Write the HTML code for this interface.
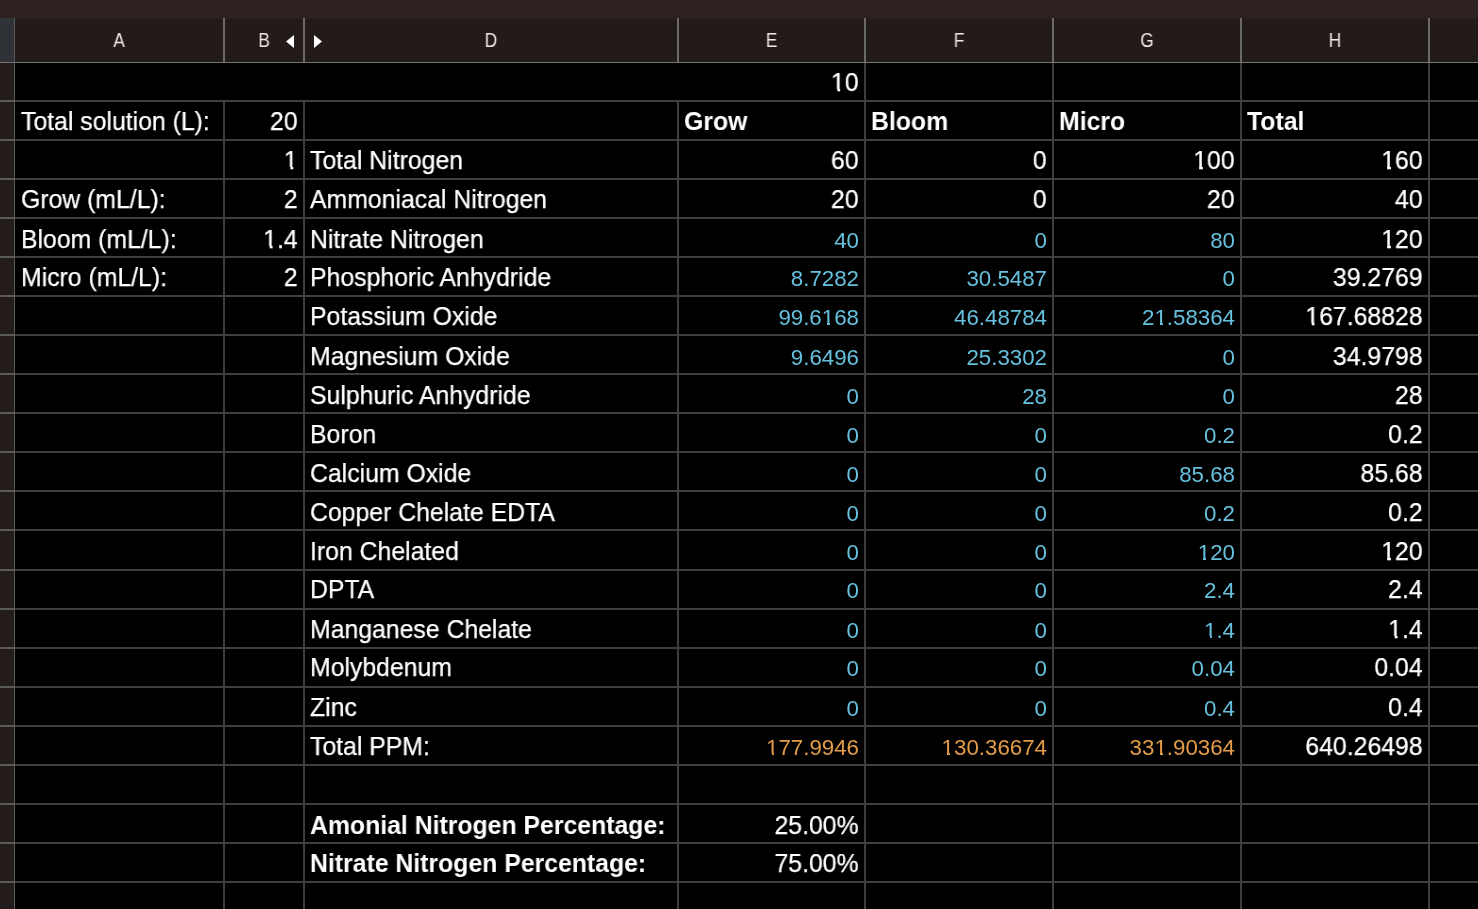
<!DOCTYPE html><html><head><meta charset="utf-8"><style>
html,body{margin:0;padding:0;width:1478px;height:909px;overflow:hidden;background:#000;}
body{position:relative;font-family:"Liberation Sans",sans-serif;}
div{position:absolute;}
.t{white-space:pre;line-height:0;height:0;will-change:transform;}
.r{text-align:right;}
.one{position:relative;}
.one::before,.one::after{content:"";position:absolute;background:#000;bottom:calc(0.212em - 0.6px);height:calc(0.1em + 0.6px);}
.one::before{left:0.03em;width:0.226em;}
.one::after{left:0.375em;width:0.19em;}
.b{font-weight:bold;}
.w.b{-webkit-text-stroke:0;}
.w{color:#ffffff;font-size:24.8px;-webkit-text-stroke:0.25px currentColor;}
.bl{color:#66c0de;font-size:22.3px;}
.o{color:#e29c4a;font-size:22.3px;}
.h{color:#f0e6e6;font-size:19.3px;text-align:center;line-height:0;height:0;will-change:transform;}
</style></head><body>
<div style="left:0;top:0;width:1478px;height:18px;background:#2d2121"></div>
<div style="left:0;top:18px;width:1478px;height:44px;background:#231b1a"></div>
<div style="left:15px;top:18px;width:1463px;height:1px;background:#282020"></div>
<div style="left:0;top:18px;width:14px;height:44px;background:#2f3236"></div>
<div style="left:0;top:62px;width:14px;height:847px;background:#231c1b"></div>
<div style="left:0;top:62px;width:1478px;height:1px;background:#747474"></div>
<div style="left:14px;top:18px;width:1px;height:891px;background:#5a5a5a"></div>
<div style="left:0;top:100px;width:14px;height:2px;background:#5a5a5a"></div>
<div style="left:15px;top:100px;width:1463px;height:2px;background:#3e3e3e"></div>
<div style="left:0;top:139px;width:14px;height:2px;background:#5a5a5a"></div>
<div style="left:15px;top:139px;width:1463px;height:2px;background:#3e3e3e"></div>
<div style="left:0;top:178px;width:14px;height:2px;background:#5a5a5a"></div>
<div style="left:15px;top:178px;width:1463px;height:2px;background:#3e3e3e"></div>
<div style="left:0;top:217px;width:14px;height:2px;background:#5a5a5a"></div>
<div style="left:15px;top:217px;width:1463px;height:2px;background:#3e3e3e"></div>
<div style="left:0;top:256px;width:14px;height:2px;background:#5a5a5a"></div>
<div style="left:15px;top:256px;width:1463px;height:2px;background:#3e3e3e"></div>
<div style="left:0;top:295px;width:14px;height:2px;background:#5a5a5a"></div>
<div style="left:15px;top:295px;width:1463px;height:2px;background:#3e3e3e"></div>
<div style="left:0;top:334px;width:14px;height:2px;background:#5a5a5a"></div>
<div style="left:15px;top:334px;width:1463px;height:2px;background:#3e3e3e"></div>
<div style="left:0;top:373px;width:14px;height:2px;background:#5a5a5a"></div>
<div style="left:15px;top:373px;width:1463px;height:2px;background:#3e3e3e"></div>
<div style="left:0;top:412px;width:14px;height:2px;background:#5a5a5a"></div>
<div style="left:15px;top:412px;width:1463px;height:2px;background:#3e3e3e"></div>
<div style="left:0;top:451px;width:14px;height:2px;background:#5a5a5a"></div>
<div style="left:15px;top:451px;width:1463px;height:2px;background:#3e3e3e"></div>
<div style="left:0;top:490px;width:14px;height:2px;background:#5a5a5a"></div>
<div style="left:15px;top:490px;width:1463px;height:2px;background:#3e3e3e"></div>
<div style="left:0;top:529px;width:14px;height:2px;background:#5a5a5a"></div>
<div style="left:15px;top:529px;width:1463px;height:2px;background:#3e3e3e"></div>
<div style="left:0;top:569px;width:14px;height:2px;background:#5a5a5a"></div>
<div style="left:15px;top:569px;width:1463px;height:2px;background:#3e3e3e"></div>
<div style="left:0;top:608px;width:14px;height:2px;background:#5a5a5a"></div>
<div style="left:15px;top:608px;width:1463px;height:2px;background:#3e3e3e"></div>
<div style="left:0;top:647px;width:14px;height:2px;background:#5a5a5a"></div>
<div style="left:15px;top:647px;width:1463px;height:2px;background:#3e3e3e"></div>
<div style="left:0;top:686px;width:14px;height:2px;background:#5a5a5a"></div>
<div style="left:15px;top:686px;width:1463px;height:2px;background:#3e3e3e"></div>
<div style="left:0;top:725px;width:14px;height:2px;background:#5a5a5a"></div>
<div style="left:15px;top:725px;width:1463px;height:2px;background:#3e3e3e"></div>
<div style="left:0;top:764px;width:14px;height:2px;background:#5a5a5a"></div>
<div style="left:15px;top:764px;width:1463px;height:2px;background:#3e3e3e"></div>
<div style="left:0;top:803px;width:14px;height:2px;background:#5a5a5a"></div>
<div style="left:15px;top:803px;width:1463px;height:2px;background:#3e3e3e"></div>
<div style="left:0;top:842px;width:14px;height:2px;background:#5a5a5a"></div>
<div style="left:15px;top:842px;width:1463px;height:2px;background:#3e3e3e"></div>
<div style="left:0;top:881px;width:14px;height:2px;background:#5a5a5a"></div>
<div style="left:15px;top:881px;width:1463px;height:2px;background:#3e3e3e"></div>
<div style="left:223px;top:18px;width:2px;height:44px;background:#6a6a6a"></div>
<div style="left:223px;top:102px;width:2px;height:807px;background:#3e3e3e"></div>
<div style="left:303px;top:18px;width:2px;height:44px;background:#6a6a6a"></div>
<div style="left:303px;top:102px;width:2px;height:807px;background:#3e3e3e"></div>
<div style="left:677px;top:18px;width:2px;height:44px;background:#6a6a6a"></div>
<div style="left:677px;top:102px;width:2px;height:807px;background:#3e3e3e"></div>
<div style="left:864px;top:18px;width:2px;height:44px;background:#6a6a6a"></div>
<div style="left:864px;top:63px;width:2px;height:846px;background:#3e3e3e"></div>
<div style="left:1052px;top:18px;width:2px;height:44px;background:#6a6a6a"></div>
<div style="left:1052px;top:63px;width:2px;height:846px;background:#3e3e3e"></div>
<div style="left:1240px;top:18px;width:2px;height:44px;background:#6a6a6a"></div>
<div style="left:1240px;top:63px;width:2px;height:846px;background:#3e3e3e"></div>
<div style="left:1428px;top:18px;width:2px;height:44px;background:#6a6a6a"></div>
<div style="left:1428px;top:63px;width:2px;height:846px;background:#3e3e3e"></div>
<div class="h" style="left:15px;width:208px;top:39.91px;font-size:19.88px;transform:scaleX(0.8738)">A</div>
<div class="h" style="left:225px;width:78px;top:39.91px;font-size:19.88px;transform:scaleX(0.8738)">B</div>
<div class="h" style="left:305px;width:372px;top:39.91px;font-size:19.88px;transform:scaleX(0.8738)">D</div>
<div class="h" style="left:679px;width:185px;top:39.91px;font-size:19.88px;transform:scaleX(0.8738)">E</div>
<div class="h" style="left:866px;width:186px;top:39.91px;font-size:19.88px;transform:scaleX(0.8738)">F</div>
<div class="h" style="left:1054px;width:186px;top:39.91px;font-size:19.88px;transform:scaleX(0.8738)">G</div>
<div class="h" style="left:1242px;width:186px;top:39.91px;font-size:19.88px;transform:scaleX(0.8738)">H</div>
<svg style="position:absolute;left:0;top:0" width="1478" height="70"><polygon points="286,41.5 294,35 294,48" fill="#fff"/><polygon points="314,35 322,41.5 314,48" fill="#fff"/></svg>
<div class="t w r" style="left:679px;width:179.6px;top:82.09px;font-size:26.29px;transform:scaleX(0.9434);transform-origin:100% 0"><span class="one">1</span>0</div>
<div class="t w" style="left:20.7px;width:208px;top:121.09px;font-size:26.29px;transform:scaleX(0.9434);transform-origin:0 0">Total solution (L):</div>
<div class="t w r" style="left:225px;width:72.6px;top:121.09px;font-size:26.29px;transform:scaleX(0.9434);transform-origin:100% 0">20</div>
<div class="t w b" style="left:684.2px;width:185px;top:121.09px;font-size:26.29px;transform:scaleX(0.9434);transform-origin:0 0">Grow</div>
<div class="t w b" style="left:871.2px;width:186px;top:121.09px;font-size:26.29px;transform:scaleX(0.9434);transform-origin:0 0">Bloom</div>
<div class="t w b" style="left:1059.2px;width:186px;top:121.09px;font-size:26.29px;transform:scaleX(0.9434);transform-origin:0 0">Micro</div>
<div class="t w b" style="left:1247.2px;width:186px;top:121.09px;font-size:26.29px;transform:scaleX(0.9434);transform-origin:0 0">Total</div>
<div class="t w r" style="left:225px;width:72.6px;top:160.09px;font-size:26.29px;transform:scaleX(0.9434);transform-origin:100% 0"><span class="one">1</span></div>
<div class="t w" style="left:310.2px;width:372px;top:160.09px;font-size:26.29px;transform:scaleX(0.9434);transform-origin:0 0">Total Nitrogen</div>
<div class="t w r" style="left:679px;width:179.6px;top:160.09px;font-size:26.29px;transform:scaleX(0.9434);transform-origin:100% 0">60</div>
<div class="t w r" style="left:866px;width:180.6px;top:160.09px;font-size:26.29px;transform:scaleX(0.9434);transform-origin:100% 0">0</div>
<div class="t w r" style="left:1054px;width:180.6px;top:160.09px;font-size:26.29px;transform:scaleX(0.9434);transform-origin:100% 0"><span class="one">1</span>00</div>
<div class="t w r" style="left:1242px;width:180.6px;top:160.09px;font-size:26.29px;transform:scaleX(0.9434);transform-origin:100% 0"><span class="one">1</span>60</div>
<div class="t w" style="left:20.7px;width:208px;top:199.09px;font-size:26.29px;transform:scaleX(0.9434);transform-origin:0 0">Grow (mL/L):</div>
<div class="t w r" style="left:225px;width:72.6px;top:199.09px;font-size:26.29px;transform:scaleX(0.9434);transform-origin:100% 0">2</div>
<div class="t w" style="left:310.2px;width:372px;top:199.09px;font-size:26.29px;transform:scaleX(0.9434);transform-origin:0 0">Ammoniacal Nitrogen</div>
<div class="t w r" style="left:679px;width:179.6px;top:199.09px;font-size:26.29px;transform:scaleX(0.9434);transform-origin:100% 0">20</div>
<div class="t w r" style="left:866px;width:180.6px;top:199.09px;font-size:26.29px;transform:scaleX(0.9434);transform-origin:100% 0">0</div>
<div class="t w r" style="left:1054px;width:180.6px;top:199.09px;font-size:26.29px;transform:scaleX(0.9434);transform-origin:100% 0">20</div>
<div class="t w r" style="left:1242px;width:180.6px;top:199.09px;font-size:26.29px;transform:scaleX(0.9434);transform-origin:100% 0">40</div>
<div class="t w" style="left:20.7px;width:208px;top:239.09px;font-size:26.29px;transform:scaleX(0.9434);transform-origin:0 0">Bloom (mL/L):</div>
<div class="t w r" style="left:225px;width:72.6px;top:239.09px;font-size:26.29px;transform:scaleX(0.9434);transform-origin:100% 0"><span class="one">1</span>.4</div>
<div class="t w" style="left:310.2px;width:372px;top:239.09px;font-size:26.29px;transform:scaleX(0.9434);transform-origin:0 0">Nitrate Nitrogen</div>
<div class="t bl r" style="left:679px;width:180.0px;top:240.77px;font-size:22.30px;transform:scaleX(1.0000);transform-origin:100% 0">40</div>
<div class="t bl r" style="left:866px;width:181.0px;top:240.77px;font-size:22.30px;transform:scaleX(1.0000);transform-origin:100% 0">0</div>
<div class="t bl r" style="left:1054px;width:181.0px;top:240.77px;font-size:22.30px;transform:scaleX(1.0000);transform-origin:100% 0">80</div>
<div class="t w r" style="left:1242px;width:180.6px;top:239.09px;font-size:26.29px;transform:scaleX(0.9434);transform-origin:100% 0"><span class="one">1</span>20</div>
<div class="t w" style="left:20.7px;width:208px;top:277.09px;font-size:26.29px;transform:scaleX(0.9434);transform-origin:0 0">Micro (mL/L):</div>
<div class="t w r" style="left:225px;width:72.6px;top:277.09px;font-size:26.29px;transform:scaleX(0.9434);transform-origin:100% 0">2</div>
<div class="t w" style="left:310.2px;width:372px;top:277.09px;font-size:26.29px;transform:scaleX(0.9434);transform-origin:0 0">Phosphoric Anhydride</div>
<div class="t bl r" style="left:679px;width:180.0px;top:278.77px;font-size:22.30px;transform:scaleX(1.0000);transform-origin:100% 0">8.7282</div>
<div class="t bl r" style="left:866px;width:181.0px;top:278.77px;font-size:22.30px;transform:scaleX(1.0000);transform-origin:100% 0">30.5487</div>
<div class="t bl r" style="left:1054px;width:181.0px;top:278.77px;font-size:22.30px;transform:scaleX(1.0000);transform-origin:100% 0">0</div>
<div class="t w r" style="left:1242px;width:180.6px;top:277.09px;font-size:26.29px;transform:scaleX(0.9434);transform-origin:100% 0">39.2769</div>
<div class="t w" style="left:310.2px;width:372px;top:316.09px;font-size:26.29px;transform:scaleX(0.9434);transform-origin:0 0">Potassium Oxide</div>
<div class="t bl r" style="left:679px;width:180.0px;top:317.77px;font-size:22.30px;transform:scaleX(1.0000);transform-origin:100% 0">99.6<span class="one">1</span>68</div>
<div class="t bl r" style="left:866px;width:181.0px;top:317.77px;font-size:22.30px;transform:scaleX(1.0000);transform-origin:100% 0">46.48784</div>
<div class="t bl r" style="left:1054px;width:181.0px;top:317.77px;font-size:22.30px;transform:scaleX(1.0000);transform-origin:100% 0">2<span class="one">1</span>.58364</div>
<div class="t w r" style="left:1242px;width:180.6px;top:316.09px;font-size:26.29px;transform:scaleX(0.9434);transform-origin:100% 0"><span class="one">1</span>67.68828</div>
<div class="t w" style="left:310.2px;width:372px;top:356.09px;font-size:26.29px;transform:scaleX(0.9434);transform-origin:0 0">Magnesium Oxide</div>
<div class="t bl r" style="left:679px;width:180.0px;top:357.77px;font-size:22.30px;transform:scaleX(1.0000);transform-origin:100% 0">9.6496</div>
<div class="t bl r" style="left:866px;width:181.0px;top:357.77px;font-size:22.30px;transform:scaleX(1.0000);transform-origin:100% 0">25.3302</div>
<div class="t bl r" style="left:1054px;width:181.0px;top:357.77px;font-size:22.30px;transform:scaleX(1.0000);transform-origin:100% 0">0</div>
<div class="t w r" style="left:1242px;width:180.6px;top:356.09px;font-size:26.29px;transform:scaleX(0.9434);transform-origin:100% 0">34.9798</div>
<div class="t w" style="left:310.2px;width:372px;top:395.09px;font-size:26.29px;transform:scaleX(0.9434);transform-origin:0 0">Sulphuric Anhydride</div>
<div class="t bl r" style="left:679px;width:180.0px;top:396.77px;font-size:22.30px;transform:scaleX(1.0000);transform-origin:100% 0">0</div>
<div class="t bl r" style="left:866px;width:181.0px;top:396.77px;font-size:22.30px;transform:scaleX(1.0000);transform-origin:100% 0">28</div>
<div class="t bl r" style="left:1054px;width:181.0px;top:396.77px;font-size:22.30px;transform:scaleX(1.0000);transform-origin:100% 0">0</div>
<div class="t w r" style="left:1242px;width:180.6px;top:395.09px;font-size:26.29px;transform:scaleX(0.9434);transform-origin:100% 0">28</div>
<div class="t w" style="left:310.2px;width:372px;top:434.09px;font-size:26.29px;transform:scaleX(0.9434);transform-origin:0 0">Boron</div>
<div class="t bl r" style="left:679px;width:180.0px;top:435.77px;font-size:22.30px;transform:scaleX(1.0000);transform-origin:100% 0">0</div>
<div class="t bl r" style="left:866px;width:181.0px;top:435.77px;font-size:22.30px;transform:scaleX(1.0000);transform-origin:100% 0">0</div>
<div class="t bl r" style="left:1054px;width:181.0px;top:435.77px;font-size:22.30px;transform:scaleX(1.0000);transform-origin:100% 0">0.2</div>
<div class="t w r" style="left:1242px;width:180.6px;top:434.09px;font-size:26.29px;transform:scaleX(0.9434);transform-origin:100% 0">0.2</div>
<div class="t w" style="left:310.2px;width:372px;top:473.09px;font-size:26.29px;transform:scaleX(0.9434);transform-origin:0 0">Calcium Oxide</div>
<div class="t bl r" style="left:679px;width:180.0px;top:474.77px;font-size:22.30px;transform:scaleX(1.0000);transform-origin:100% 0">0</div>
<div class="t bl r" style="left:866px;width:181.0px;top:474.77px;font-size:22.30px;transform:scaleX(1.0000);transform-origin:100% 0">0</div>
<div class="t bl r" style="left:1054px;width:181.0px;top:474.77px;font-size:22.30px;transform:scaleX(1.0000);transform-origin:100% 0">85.68</div>
<div class="t w r" style="left:1242px;width:180.6px;top:473.09px;font-size:26.29px;transform:scaleX(0.9434);transform-origin:100% 0">85.68</div>
<div class="t w" style="left:310.2px;width:372px;top:512.09px;font-size:26.29px;transform:scaleX(0.9434);transform-origin:0 0">Copper Chelate EDTA</div>
<div class="t bl r" style="left:679px;width:180.0px;top:513.77px;font-size:22.30px;transform:scaleX(1.0000);transform-origin:100% 0">0</div>
<div class="t bl r" style="left:866px;width:181.0px;top:513.77px;font-size:22.30px;transform:scaleX(1.0000);transform-origin:100% 0">0</div>
<div class="t bl r" style="left:1054px;width:181.0px;top:513.77px;font-size:22.30px;transform:scaleX(1.0000);transform-origin:100% 0">0.2</div>
<div class="t w r" style="left:1242px;width:180.6px;top:512.09px;font-size:26.29px;transform:scaleX(0.9434);transform-origin:100% 0">0.2</div>
<div class="t w" style="left:310.2px;width:372px;top:551.09px;font-size:26.29px;transform:scaleX(0.9434);transform-origin:0 0">Iron Chelated</div>
<div class="t bl r" style="left:679px;width:180.0px;top:552.77px;font-size:22.30px;transform:scaleX(1.0000);transform-origin:100% 0">0</div>
<div class="t bl r" style="left:866px;width:181.0px;top:552.77px;font-size:22.30px;transform:scaleX(1.0000);transform-origin:100% 0">0</div>
<div class="t bl r" style="left:1054px;width:181.0px;top:552.77px;font-size:22.30px;transform:scaleX(1.0000);transform-origin:100% 0"><span class="one">1</span>20</div>
<div class="t w r" style="left:1242px;width:180.6px;top:551.09px;font-size:26.29px;transform:scaleX(0.9434);transform-origin:100% 0"><span class="one">1</span>20</div>
<div class="t w" style="left:310.2px;width:372px;top:589.09px;font-size:26.29px;transform:scaleX(0.9434);transform-origin:0 0">DPTA</div>
<div class="t bl r" style="left:679px;width:180.0px;top:590.77px;font-size:22.30px;transform:scaleX(1.0000);transform-origin:100% 0">0</div>
<div class="t bl r" style="left:866px;width:181.0px;top:590.77px;font-size:22.30px;transform:scaleX(1.0000);transform-origin:100% 0">0</div>
<div class="t bl r" style="left:1054px;width:181.0px;top:590.77px;font-size:22.30px;transform:scaleX(1.0000);transform-origin:100% 0">2.4</div>
<div class="t w r" style="left:1242px;width:180.6px;top:589.09px;font-size:26.29px;transform:scaleX(0.9434);transform-origin:100% 0">2.4</div>
<div class="t w" style="left:310.2px;width:372px;top:629.09px;font-size:26.29px;transform:scaleX(0.9434);transform-origin:0 0">Manganese Chelate</div>
<div class="t bl r" style="left:679px;width:180.0px;top:630.77px;font-size:22.30px;transform:scaleX(1.0000);transform-origin:100% 0">0</div>
<div class="t bl r" style="left:866px;width:181.0px;top:630.77px;font-size:22.30px;transform:scaleX(1.0000);transform-origin:100% 0">0</div>
<div class="t bl r" style="left:1054px;width:181.0px;top:630.77px;font-size:22.30px;transform:scaleX(1.0000);transform-origin:100% 0"><span class="one">1</span>.4</div>
<div class="t w r" style="left:1242px;width:180.6px;top:629.09px;font-size:26.29px;transform:scaleX(0.9434);transform-origin:100% 0"><span class="one">1</span>.4</div>
<div class="t w" style="left:310.2px;width:372px;top:667.09px;font-size:26.29px;transform:scaleX(0.9434);transform-origin:0 0">Molybdenum</div>
<div class="t bl r" style="left:679px;width:180.0px;top:668.77px;font-size:22.30px;transform:scaleX(1.0000);transform-origin:100% 0">0</div>
<div class="t bl r" style="left:866px;width:181.0px;top:668.77px;font-size:22.30px;transform:scaleX(1.0000);transform-origin:100% 0">0</div>
<div class="t bl r" style="left:1054px;width:181.0px;top:668.77px;font-size:22.30px;transform:scaleX(1.0000);transform-origin:100% 0">0.04</div>
<div class="t w r" style="left:1242px;width:180.6px;top:667.09px;font-size:26.29px;transform:scaleX(0.9434);transform-origin:100% 0">0.04</div>
<div class="t w" style="left:310.2px;width:372px;top:707.09px;font-size:26.29px;transform:scaleX(0.9434);transform-origin:0 0">Zinc</div>
<div class="t bl r" style="left:679px;width:180.0px;top:708.77px;font-size:22.30px;transform:scaleX(1.0000);transform-origin:100% 0">0</div>
<div class="t bl r" style="left:866px;width:181.0px;top:708.77px;font-size:22.30px;transform:scaleX(1.0000);transform-origin:100% 0">0</div>
<div class="t bl r" style="left:1054px;width:181.0px;top:708.77px;font-size:22.30px;transform:scaleX(1.0000);transform-origin:100% 0">0.4</div>
<div class="t w r" style="left:1242px;width:180.6px;top:707.09px;font-size:26.29px;transform:scaleX(0.9434);transform-origin:100% 0">0.4</div>
<div class="t w" style="left:310.2px;width:372px;top:746.09px;font-size:26.29px;transform:scaleX(0.9434);transform-origin:0 0">Total PPM:</div>
<div class="t o r" style="left:679px;width:180.0px;top:747.77px;font-size:22.30px;transform:scaleX(1.0000);transform-origin:100% 0"><span class="one">1</span>77.9946</div>
<div class="t o r" style="left:866px;width:181.0px;top:747.77px;font-size:22.30px;transform:scaleX(1.0000);transform-origin:100% 0"><span class="one">1</span>30.36674</div>
<div class="t o r" style="left:1054px;width:181.0px;top:747.77px;font-size:22.30px;transform:scaleX(1.0000);transform-origin:100% 0">33<span class="one">1</span>.90364</div>
<div class="t w r" style="left:1242px;width:180.6px;top:746.09px;font-size:26.29px;transform:scaleX(0.9434);transform-origin:100% 0">640.26498</div>
<div class="t w b" style="left:310.2px;width:372px;top:825.09px;font-size:26.29px;transform:scaleX(0.9434);transform-origin:0 0">Amonial Nitrogen Percentage:</div>
<div class="t w r" style="left:679px;width:179.6px;top:825.09px;font-size:26.29px;transform:scaleX(0.9434);transform-origin:100% 0">25.00%</div>
<div class="t w b" style="left:310.2px;width:372px;top:863.09px;font-size:26.29px;transform:scaleX(0.9434);transform-origin:0 0">Nitrate Nitrogen Percentage:</div>
<div class="t w r" style="left:679px;width:179.6px;top:863.09px;font-size:26.29px;transform:scaleX(0.9434);transform-origin:100% 0">75.00%</div>
</body></html>
